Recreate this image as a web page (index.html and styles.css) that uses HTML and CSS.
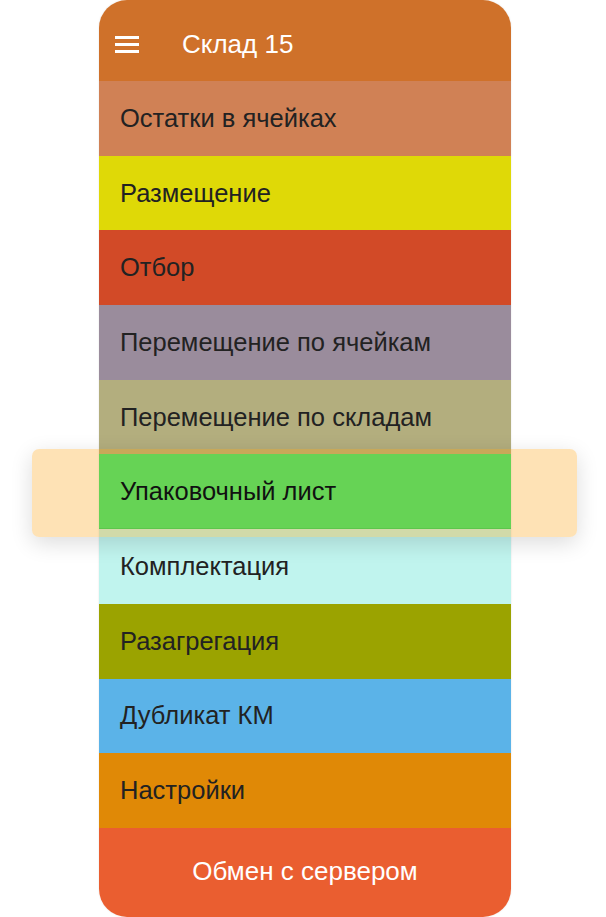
FILE: index.html
```html
<!DOCTYPE html>
<html>
<head>
    <meta charset="utf-8">
    <link rel="stylesheet" href="styles.css">
</head>
<body>
    <div class="screen">
        <!-- Шапка -->
        <div class="header">
            <svg class="menu-icon" width="24" height="18" viewBox="0 0 24 18">
                <rect x="0" y="1" width="24" height="3" fill="#fff"/>
                <rect x="0" y="8" width="24" height="3" fill="#fff"/>
                <rect x="0" y="15" width="24" height="3" fill="#fff"/>
            </svg>
            <span class="title">Склад 15</span>
        </div>

        <!-- Меню -->
        <div class="menu">
            <div class="item item-ostatki">Остатки в ячейках</div>
            <div class="item item-razmeshenie">Размещение</div>
            <div class="item item-otbor">Отбор</div>
            <div class="item item-peremeshenie">Перемещение по ячейкам</div>
            <div class="item item-sklady">Перемещение по складам</div>
            <div class="item item-upakovka">Упаковочный лист</div>
            <div class="item item-komplekt">Комплектация</div>
            <div class="item item-razagr">Разагрегация</div>
            <div class="item item-dublikat">Дубликат КМ</div>
            <div class="item item-nastroiki">Настройки</div>
        </div>

        <div class="footer">Обмен с сервером</div>
    </div>

    <!-- Подсветка выбранного пункта -->
    <div class="highlight"></div>
</body>
</html>
```

FILE: styles.css
```css
body {
    margin: 0;
    background: #fff;
    font-family: "Liberation Sans", Arial, sans-serif;
    width: 606px;
    height: 917px;
    overflow: hidden;
    position: relative;
}
.screen {
    width: 412px;
    height: 917px;
    margin-left: 99px;
    border-radius: 28px;
    overflow: hidden;
    display: flex;
    flex-direction: column;
    box-shadow: 0 0 2px rgba(0, 0, 0, 0.12);
}
.header {
    height: 81px;
    box-sizing: border-box;
    background-color: #cf712a;
    display: flex;
    align-items: center;
    padding-left: 16px;
    padding-top: 7px;
    color: #fff;
    flex-shrink: 0;
}
.title {
    font-size: 26px;
    margin-left: 43px;
}
.menu {
    display: flex;
    flex-direction: column;
}
.item {
    height: 74.7px;
    display: flex;
    align-items: center;
    padding-left: 21px;
    font-size: 25.5px;
    color: #222;
    flex-shrink: 0;
}
.item-ostatki { background-color: #d08155; }
.item-razmeshenie { background-color: #dfd907; }
.item-otbor { background-color: #d24a27; }
.item-peremeshenie { background-color: #9a8c9c; }
.item-sklady { background-color: #b3ae7e; }
.item-upakovka {
    background-color: #66d355;
    color: #111;
    position: relative;
    z-index: 2;
    box-shadow: inset 0 -1px 0 #5cc64c;
}
.item-komplekt { background-color: #c0f4ee; }
.item-razagr { background-color: #9ba300; }
.item-dublikat { background-color: #5bb3e8; }
.item-nastroiki { background-color: #e08906; }
.footer {
    flex: 1;
    background-color: #ea5e30;
    color: #fff;
    font-size: 26px;
    display: flex;
    align-items: center;
    justify-content: center;
    padding-bottom: 2px;
}
.highlight {
    position: absolute;
    left: 32px;
    top: 449px;
    width: 545px;
    height: 88px;
    border-radius: 7px;
    background: rgba(251, 155, 0, 0.29);
    box-shadow: 0 6px 22px rgba(0, 0, 0, 0.14);
    z-index: 1;
}
```
